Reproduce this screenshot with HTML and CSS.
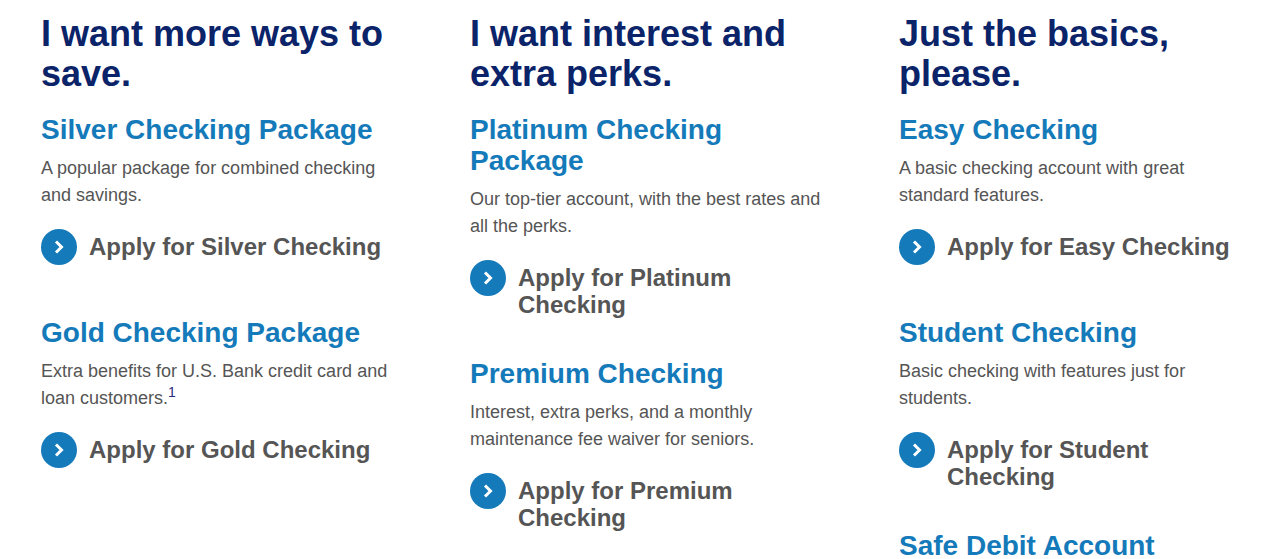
FILE: index.html
```html
<!DOCTYPE html>
<html lang="en">
  <head>
    <meta charset="utf-8">
    <title>Checking Accounts</title>
    <link rel="stylesheet" href="styles.css">
  </head>
  <body>
    <main class="columns">
      <section class="column">
        <h2>I want more ways to save.</h2>
        <div class="account">
          <h3><a href="#silver">Silver Checking Package</a></h3>
          <p>A popular package for combined checking and savings.</p>
          <a class="apply" href="#apply-silver">
            <svg class="arrow" viewBox="0 0 36 36" aria-hidden="true"><circle cx="18" cy="18" r="18"/><path d="M15 12.5l5.5 5.5-5.5 5.5"/></svg>
            <span>Apply for Silver Checking</span>
          </a>
        </div>
        <div class="account">
          <h3><a href="#gold">Gold Checking Package</a></h3>
          <p>Extra benefits for U.S. Bank credit card and loan customers.<sup><a href="#note1">1</a></sup></p>
          <a class="apply" href="#apply-gold">
            <svg class="arrow" viewBox="0 0 36 36" aria-hidden="true"><circle cx="18" cy="18" r="18"/><path d="M15 12.5l5.5 5.5-5.5 5.5"/></svg>
            <span>Apply for Gold Checking</span>
          </a>
        </div>
      </section>

      <section class="column">
        <h2>I want interest and extra perks.</h2>
        <div class="account">
          <h3><a href="#platinum">Platinum Checking Package</a></h3>
          <p>Our top-tier account, with the best rates and all the perks.</p>
          <a class="apply" href="#apply-platinum">
            <svg class="arrow" viewBox="0 0 36 36" aria-hidden="true"><circle cx="18" cy="18" r="18"/><path d="M15 12.5l5.5 5.5-5.5 5.5"/></svg>
            <span>Apply for Platinum Checking</span>
          </a>
        </div>
        <div class="account">
          <h3><a href="#premium">Premium Checking</a></h3>
          <p>Interest, extra perks, and a monthly maintenance fee waiver for seniors.</p>
          <a class="apply" href="#apply-premium">
            <svg class="arrow" viewBox="0 0 36 36" aria-hidden="true"><circle cx="18" cy="18" r="18"/><path d="M15 12.5l5.5 5.5-5.5 5.5"/></svg>
            <span>Apply for Premium Checking</span>
          </a>
        </div>
      </section>

      <section class="column">
        <h2>Just the basics, please.</h2>
        <div class="account">
          <h3><a href="#easy">Easy Checking</a></h3>
          <p>A basic checking account with great standard features.</p>
          <a class="apply" href="#apply-easy">
            <svg class="arrow" viewBox="0 0 36 36" aria-hidden="true"><circle cx="18" cy="18" r="18"/><path d="M15 12.5l5.5 5.5-5.5 5.5"/></svg>
            <span>Apply for Easy Checking</span>
          </a>
        </div>
        <div class="account">
          <h3><a href="#student">Student Checking</a></h3>
          <p>Basic checking with features just for students.</p>
          <a class="apply" href="#apply-student">
            <svg class="arrow" viewBox="0 0 36 36" aria-hidden="true"><circle cx="18" cy="18" r="18"/><path d="M15 12.5l5.5 5.5-5.5 5.5"/></svg>
            <span>Apply for Student Checking</span>
          </a>
        </div>
        <div class="account">
          <h3><a href="#safe-debit">Safe Debit Account</a></h3>
        </div>
      </section>
    </main>
  </body>
</html>
```

FILE: styles.css
```css
body {
  margin: 0;
  background-color: #ffffff;
  color: #555555;
  font-family: "Liberation Sans", Arial, sans-serif;
  font-size: 18px;
  line-height: 27px;
}

a {
  color: inherit;
  text-decoration: none;
}

/* Three groups of accounts */
.columns {
  display: grid;
  grid-template-columns: repeat(3, 1fr);
  gap: 72px;
  padding: 14px 15px 0 41px;
}

h2 {
  margin: 0 0 20px;
  color: #0a2369;
  font-size: 36px;
  line-height: 40px;
}

h3 {
  margin: 0 0 10px;
  color: #147aba;
  font-size: 28px;
  line-height: 31px;
}

p {
  margin: 0;
}

sup {
  color: #2a2a80;
  font-size: 14px;
  line-height: 0;
}

.account {
  margin-bottom: 40px;
}

.account:last-child {
  margin-bottom: 0;
}

.account:last-child h3:last-child {
  margin-bottom: 0;
}

/* Round arrow with the link text beside it */
.apply {
  display: flex;
  align-items: flex-start;
  gap: 12px;
  min-height: 48px;
  margin-top: 20px;
  font-size: 24px;
  font-weight: bold;
}

.apply span {
  padding-top: 4px;
}

.arrow {
  flex: none;
  width: 36px;
  height: 36px;
  fill: #147aba;
}

.arrow path {
  fill: none;
  stroke: #ffffff;
  stroke-width: 3;
}
```
